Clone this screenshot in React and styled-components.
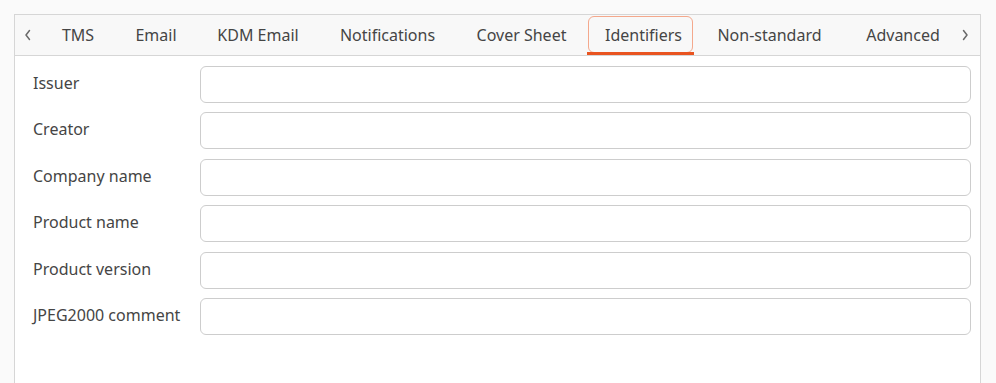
import React from "react";
import styled, { createGlobalStyle } from "styled-components";

const Global = createGlobalStyle`
  html, body { margin: 0; padding: 0; background: #fafafa; }
  body { font-family: "Noto Sans", "Open Sans", sans-serif; color: #454545; }
  * { box-sizing: border-box; }
`;

const Page = styled.div`
  padding: 14px 15px 0 14px;
  height: 383px;
  overflow: hidden;
`;

const Notebook = styled.div`
  border: 1px solid #d6d6d6;
  border-bottom: none;
  height: 400px;
  background: #ffffff;
  display: flex;
  flex-direction: column;
`;

const TabBar = styled.div`
  display: flex;
  align-items: stretch;
  height: 41px;
  background: #f8f8f8;
  border-bottom: 1px solid #d6d6d6;
`;

const Arrow = styled.div`
  width: ${(p) => p.$w}px;
  display: flex;
  align-items: center;
  justify-content: center;
  flex: none;
`;

const Tabs = styled.div`
  flex: 1;
  min-width: 0;
  overflow: hidden;
  display: flex;
  align-items: stretch;
`;

const Tab = styled.div`
  position: relative;
  width: ${(p) => p.$w}px;
  flex: none;
  display: flex;
  align-items: center;
  justify-content: center;
  padding-bottom: 1px;
  padding-left: ${(p) => (p.$active ? 6 : 0)}px;
  font-size: 16px;
  color: #454545;
  white-space: nowrap;
  ${(p) =>
    p.$active &&
    `
    &::before {
      content: "";
      position: absolute;
      left: 1px; right: 1px; top: 1px; bottom: 2px;
      border: 1px solid #f4a88c;
      border-radius: 6px;
    }
    &::after {
      content: "";
      position: absolute;
      left: 0; right: 0; bottom: 0;
      height: 3px;
      background: #e95420;
    }
  `}
`;

const Form = styled.div`
  display: grid;
  grid-template-columns: 167px 1fr;
  row-gap: 9.6px;
  padding: 9.5px 9px 0 18px;
`;

const Label = styled.label`
  font-size: 16px;
  color: #454545;
  display: flex;
  align-items: center;
  height: 37px;
  padding-bottom: 3px;
`;

const Input = styled.input`
  height: 37px;
  border: 1px solid #cdcdcd;
  border-radius: 6px;
  background: #fff;
  font: inherit;
  padding: 0 10px;
  outline: none;
`;

const Chevron = ({ dir }) => (
  <svg width="10" height="14" viewBox="0 0 10 14">
    <path
      d={dir === "left" ? "M6.5 2.5 L3 7 L6.5 11.5" : "M3.5 2.5 L7 7 L3.5 11.5"}
      fill="none"
      stroke="#6a6a6a"
      strokeWidth="1.5"
      strokeLinecap="round"
      strokeLinejoin="round"
    />
  </svg>
);

const tabs = [
  ["TMS", 74],
  ["Email", 82],
  ["KDM Email", 122],
  ["Notifications", 137],
  ["Cover Sheet", 131],
  ["Identifiers", 107],
  ["Non-standard", 151],
  ["Advanced", 116],
];

const fields = [
  "Issuer",
  "Creator",
  "Company name",
  "Product name",
  "Product version",
  "JPEG2000 comment",
];

export default function App() {
  return (
    <>
      <Global />
      <Page>
        <Notebook>
          <TabBar>
            <Arrow $w={26}>
              <Chevron dir="left" />
            </Arrow>
            <Tabs>
              {tabs.map(([t, w]) => (
                <Tab key={t} $w={w} $active={t === "Identifiers"}>
                  {t}
                </Tab>
              ))}
            </Tabs>
            <Arrow $w={30}>
              <Chevron dir="right" />
            </Arrow>
          </TabBar>
          <Form>
            {fields.map((f) => (
              <React.Fragment key={f}>
                <Label>{f}</Label>
                <Input />
              </React.Fragment>
            ))}
          </Form>
        </Notebook>
      </Page>
    </>
  );
}
